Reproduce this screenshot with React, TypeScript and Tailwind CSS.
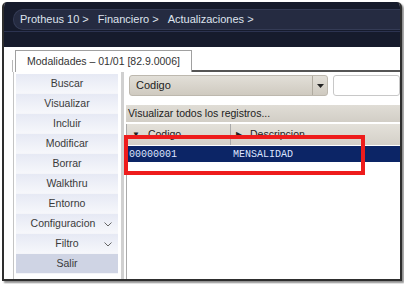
import React from "react";

const menu = ["Buscar","Visualizar","Incluir","Modificar","Borrar","Walkthru","Entorno","Configuracion","Filtro","Salir"];

function Chevron() {
  return (
    <svg width="8" height="5" viewBox="0 0 8 5" className="absolute right-[6px] top-[8px]">
      <path d="M0.5 0.5 L4 4 L7.5 0.5" fill="none" stroke="#666" strokeWidth="1" />
    </svg>
  );
}

export default function App() {
  return (
    <div className="w-[404px] h-[284px] bg-white relative overflow-hidden font-['Liberation_Sans',Arial,sans-serif]">
      <div className="absolute left-[2px] top-[2px] w-[400px] h-[279px] flex flex-col bg-white border-l-[2px] border-r-[2px] border-b-[2px] border-[#2e2e2e] rounded-t-[5px] shadow-[2px_2px_2px_rgba(0,0,0,0.45)] overflow-hidden">
        {/* header */}
        <div className="h-[45px] bg-[#161b2c] flex flex-col pt-[7px]">
          <div className="ml-[9px] h-[21px] rounded-l-[10px] bg-[#252b41] border border-[#343b55] border-r-0 flex items-center pl-[6px] text-[11px] text-[#dfe3ee]">
            <span>Protheus 10 &gt;</span>
            <span className="ml-[9px]">Financiero &gt;</span>
            <span className="ml-[9px]">Actualizaciones &gt;</span>
          </div>
          <div className="mt-[1px] h-[1px] bg-[#2c3350]" />
        </div>
        {/* tab row */}
        <div className="h-[25px] flex items-end">
          <div className="w-[9px] h-[12px] border-r border-[#b8b8b8]" />
          <div className="ml-[2px] h-[22px] w-[177px] border border-b-0 border-[#a0a0a0] bg-white flex items-center justify-center text-[10.5px] text-[#333]">
            Modalidades – 01/01 [82.9.0006]
          </div>
          <div className="flex-1 h-[2px] bg-[#555]" />
        </div>
        {/* body */}
        <div className="flex-1 flex">
          <div className="ml-[9px] w-[111px] border-l border-[#c4c4c4] border-r-[3px] border-r-[#d0d0d0] pt-[2px] pl-[2px] pr-[3px] flex flex-col">
            {menu.map((m) => (
              <div
                key={m}
                className={
                  "relative h-[20px] flex items-center justify-center text-[10.5px] text-[#3a3a3a] border-b border-[#f4f5f9] " +
                  (m === "Salir" ? "bg-[#cfd4e4]" : "bg-gradient-to-b from-[#e6e9f4] to-[#f6f7fb]")
                }
              >
                <span className={m === "Configuracion" ? "-ml-[8px]" : ""}>{m}</span>
                {(m === "Configuracion" || m === "Filtro") && <Chevron />}
              </div>
            ))}
          </div>
          <div className="flex-1 ml-[2px] flex flex-col pt-[3px]">
            <div className="flex h-[21px] ml-[3px]">
              <div className="w-[199px] flex rounded-[3px] border border-[#bdb8ae] bg-gradient-to-b from-[#e2dfd8] to-[#cfcac0]">
                <div className="flex-1 flex items-center pl-[6px] text-[11px] text-[#222]">Codigo</div>
                <div className="w-[15px] border-l border-[#b0aba0] flex items-center justify-center">
                  <svg width="7" height="4" viewBox="0 0 7 4"><path d="M0 0 L7 0 L3.5 4 Z" fill="#222" /></svg>
                </div>
              </div>
              <div className="ml-[5px] flex-1 rounded-[3px] border border-[#c8c8c8] bg-white" />
            </div>
            <div className="mt-[9px] h-[17px] bg-gradient-to-b from-[#e0ddd6] to-[#d2cec6] flex items-center pl-[2px] text-[10.5px] text-[#222]">
              Visualizar todos los registros...
            </div>
            <div className="mt-[2px] h-[21px] flex bg-gradient-to-b from-[#e4e1da] to-[#d4d0c8] border-l border-[#aaa] text-[10.5px] text-[#222]">
              <div className="w-[104px] border-r border-[#aaa] flex items-center pl-[5px] gap-[8px]">
                <span className="text-[8px]">▼</span><span>Codigo</span>
              </div>
              <div className="flex-1 flex items-center pl-[5px] gap-[8px]">
                <span className="text-[8px]">▶</span><span>Descripcion</span>
              </div>
            </div>
            <div className="mt-[1px] h-[16px] flex bg-[#0c2566] text-[10px] text-[#dde4ff] font-['Liberation_Mono',monospace] border-l border-[#aaa]">
              <div className="w-[104px] flex items-center pl-[2px]">00000001</div>
              <div className="flex-1 flex items-center pl-[2px]">MENSALIDAD</div>
            </div>
            <div className="flex-1 bg-white border-l border-[#aaa]" />
          </div>
        </div>
      </div>
      {/* red annotation rectangle */}
      <div className="absolute left-[124px] top-[135px] w-[241px] h-[40px] border-[4px] border-[#ee1c1c]" />
    </div>
  );
}
